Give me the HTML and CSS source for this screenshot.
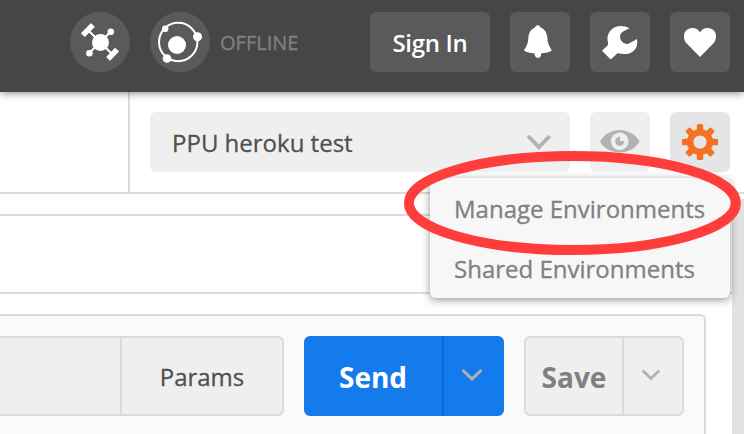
FILE: index.html
```
<!DOCTYPE html>
<html lang="en">
<head>
<meta charset="utf-8">
<title>Environments</title>
<link rel="stylesheet" href="styles.css">
</head>
<body>
<header class="topbar">
  <div class="round"><svg width="60" height="60" viewBox="70 12 60 60">
    <path d="M88 30 113 55M110.700 31.800 89.300 53" stroke="#fff" stroke-width="2"/>
    <g fill="#fff"><circle cx="100.500" cy="42.400" r="8.500"/><circle cx="110.800" cy="31.800" r="3.300"/><circle cx="89.400" cy="53.200" r="3.300"/></g>
    <path d="M82 33.400 90.800 24.200 93.800 26.800 84.800 36ZM115 48.800 118 51.400 110 59.800 107.200 57Z" fill="#fff" stroke="#fff" stroke-width="1.600" stroke-linejoin="round"/>
  </svg></div>
  <div class="round orbit"><svg width="60" height="60" viewBox="150 12 60 60">
    <circle cx="178.200" cy="42" r="19.200" fill="none" stroke="#fff" stroke-width="2"/>
    <g fill="#fff"><circle cx="177" cy="45" r="9"/><circle cx="165.200" cy="28.700" r="3.200"/><circle cx="197.500" cy="36.700" r="4.500"/><circle cx="167" cy="58.500" r="4.300"/></g>
  </svg></div>
  <span class="status">OFFLINE</span>
  <button class="signin"><span>Sign In</span></button>
  <button class="tool"><svg width="60" height="60" viewBox="510 12 60 60">
    <path fill="#fff" d="M535 27.400A2.900 2.900 0 0 1 540.600 27.400C545.500 29.400 547.200 33.500 547.400 38.500C547.500 43 549.500 46.500 551.700 50.200C550.500 52 545 53 541 53.400V55.500A3.200 3.200 0 0 1 534.800 55.500V53.400C530.500 53 525.500 52.300 524 50.200C526.500 46.500 528.200 43 528.300 38.500C528.500 33.500 530.200 29.400 535 27.400Z"/>
  </svg></button>
  <button class="tool"><svg width="60" height="60" viewBox="590 12 60 60">
    <path fill="#fff" d="M629.500 28.300C625 26 620 25.200 616 26.800C610 29.200 607 34.500 607.500 40C607.800 42 608.500 43.500 608 45L602 50.700L610.700 59.400L617.500 53.300C619 52.800 622 54.200 626 54.100C632 54 639 48.500 637 39L628.500 43.800C624.500 44.800 620 41 620 36.800C620 34 621.500 32.500 623.500 31.300Z"/>
  </svg></button>
  <button class="tool"><svg width="60" height="60" viewBox="670 12 60 60">
    <path fill="#fff" d="M700 57 686.500 43.300C683.300 39.800 683.300 34 685.500 31.200C689.500 26.400 697 26.900 700 32.200C703 26.900 710.500 26.400 714.500 31.200C716.700 34 716.700 39.800 713.500 43.300Z"/>
  </svg></button>
</header>

<section class="envbar">
  <div class="tabs"></div>
  <div class="environment">
    <div class="select"><span class="envname">PPU heroku test</span>
      <svg width="26" height="18" viewBox="526 133 26 18"><path d="M528 136 538.900 147.200 549.800 136" fill="none" stroke="#b2b2b2" stroke-width="3.900"/></svg>
    </div>
    <button class="eye"><svg width="60" height="60" viewBox="590 112 60 60">
      <path fill="#b2b2b2" d="M600 141.500C604 134 612 130 619.700 130S635.500 134 639.500 141.500C635.500 148.500 628 152.400 619.700 152.400S604 148.500 600 141.500Z"/>
      <circle cx="619.700" cy="141.200" r="8.800" fill="#efefef"/><circle cx="619.700" cy="141.200" r="4.500" fill="#b2b2b2"/><path fill="#efefef" d="M620 136V141H624.500C625 138 623 136 620 136Z"/>
    </svg></button>
    <button class="gear"><svg width="60" height="60" viewBox="-30 -30 60 60">
      <g fill="#f47023"><rect x="-3.200" y="-18" width="6.400" height="36" rx="1.500"/><rect x="-3.200" y="-18" width="6.400" height="36" rx="1.500" transform="rotate(45)"/><rect x="-3.200" y="-18" width="6.400" height="36" rx="1.500" transform="rotate(90)"/><rect x="-3.200" y="-18" width="6.400" height="36" rx="1.500" transform="rotate(135)"/><circle r="13"/></g><circle r="6.600" fill="#e5e5e5"/>
    </svg></button>
    <nav class="menu"><a class="manage"><span>Manage Environments</span></a><a class="shared"><span>Shared Environments</span></a></nav>
    <svg class="ring" width="344" height="112" viewBox="400 147 344 112"><ellipse cx="572.400" cy="203" rx="163.500" ry="47" fill="none" stroke="#ff3e3b" stroke-width="10"/></svg>
  </div>
</section>

<main class="workspace">
  <div class="content">
    <div class="strip"></div>
    <div class="request">
      <div class="url"><div class="field"></div><button class="params"><span>Params</span></button></div>
      <div class="send"><button><span>Send</span></button><button class="more"><svg width="24" height="16" viewBox="0 0 24 16"><path d="M2.500 3 12 12 21.500 3" fill="none" stroke="#b2b2b2" stroke-width="3"/></svg></button></div>
      <div class="save"><button><span>Save</span></button><button class="more"><svg width="20" height="14" viewBox="0 0 20 14"><path d="M1.700 2.500 10 10.500 18.300 2.500" fill="none" stroke="#b2b2b2" stroke-width="2.800"/></svg></button></div>
    </div>
  </div>
  <div class="scrollbar"></div>
</main>
</body>
</html>
```
FILE: styles.css
```
* { box-sizing: border-box; }
body {
  margin: 0;
  width: 744px;
  height: 434px;
  overflow: hidden;
  display: flex;
  flex-direction: column;
  background: #fff;
  color: #505050;
  font: 24px "Open Sans", sans-serif;
  -webkit-text-stroke: .3px currentColor;
}
button {
  border: 0;
  padding: 0;
  background: none;
  font: inherit;
  color: inherit;
}
svg { display: block; flex: none; }
span { white-space: nowrap; }

.topbar {
  position: relative;
  z-index: 1;
  height: 92px;
  flex: none;
  display: flex;
  align-items: flex-start;
  padding: 12px 14px 0 70px;
  background: #464646;
  box-shadow: 0 1px 8px rgba(0, 0, 0, .48);
}
.round {
  width: 60px;
  height: 60px;
  border-radius: 50%;
  background: #5a5a5a;
}
.orbit { margin-left: 20px; }
.status {
  margin-left: 10px;
  font-size: 20px;
  line-height: 62px;
  color: #808080;
}
.signin, .tool {
  height: 60px;
  border-radius: 6px;
  background: #5a5a5a;
  color: #fff;
}
.signin {
  width: 120px;
  margin-left: auto;
  font-weight: 600;
  letter-spacing: -.3px;
  -webkit-text-stroke: 0;
}
.tool { width: 60px; margin-left: 20px; }

.envbar {
  height: 102px;
  flex: none;
  display: flex;
  border-bottom: 2px solid #dbdbdb;
}
.tabs { width: 130px; border-right: 2px solid #dbdbdb; }
.environment {
  position: relative;
  display: flex;
  gap: 20px;
  padding: 20px 14px 20px 20px;
}
.select {
  width: 420px;
  height: 60px;
  display: flex;
  align-items: center;
  justify-content: space-between;
  padding: 0 18px 0 22px;
  border-radius: 6px;
  background: #efefef;
}
.eye, .gear {
  width: 60px;
  height: 60px;
  border-radius: 6px;
  background: #efefef;
}
.gear { background: #e5e5e5; }
.menu {
  position: absolute;
  z-index: 2;
  top: 86px;
  right: 14px;
  width: 300px;
  height: 120px;
  border-radius: 6px;
  background: #f7f7f7;
  box-shadow: 0 2px 8px rgba(0, 0, 0, .42);
  color: #808080;
}
.menu a {
  display: block;
  height: 60px;
  padding-left: 24px;
  line-height: 62px;
}
.ring { position: absolute; z-index: 3; top: 55px; right: 0; }

.workspace { flex: 1; display: flex; }
.content { width: 732px; padding-top: 20px; }
.strip {
  height: 80px;
  border: solid #dbdbdb;
  border-width: 2px 0;
}
.request {
  width: 706px;
  height: 140px;
  margin-top: 20px;
  padding-top: 20px;
  display: flex;
  gap: 20px;
  border: 2px solid #dbdbdb;
  border-width: 2px 2px 0 0;
  border-radius: 0 6px 0 0;
  background: #fafafa;
}
.url, .save {
  height: 80px;
  display: flex;
  border: 2px solid #dbdbdb;
  border-radius: 6px;
  background: #efefef;
}
.url { width: 284px; border-left: 0; border-radius: 0 6px 6px 0; }
.field { width: 120px; }
.params { flex: 1; border-left: 2px solid #dbdbdb; }
.send, .save {
  font-weight: 700;
  font-size: 28px;
  letter-spacing: -.4px;
  -webkit-text-stroke: 0;
}
.send {
  width: 200px;
  height: 80px;
  display: flex;
  border-radius: 6px;
  background: #147bec;
  color: #fff;
}
.send > :first-child { width: 138px; padding-top: 2px; }
.more {
  flex: 1;
  display: flex;
  align-items: center;
  justify-content: center;
  padding: 0 4px 2px 0;
}
.send .more { border-left: 2px solid #126ac6; }
.save {
  width: 160px;
  color: #808080;
}
.save > :first-child { width: 96px; padding-top: 2px; }
.save .more { border-left: 2px solid #dbdbdb; }
.scrollbar {
  width: 12px;
  margin-top: 5px;
  border-radius: 12px 0 0 0;
  background: #e1e1e1;
}
```
